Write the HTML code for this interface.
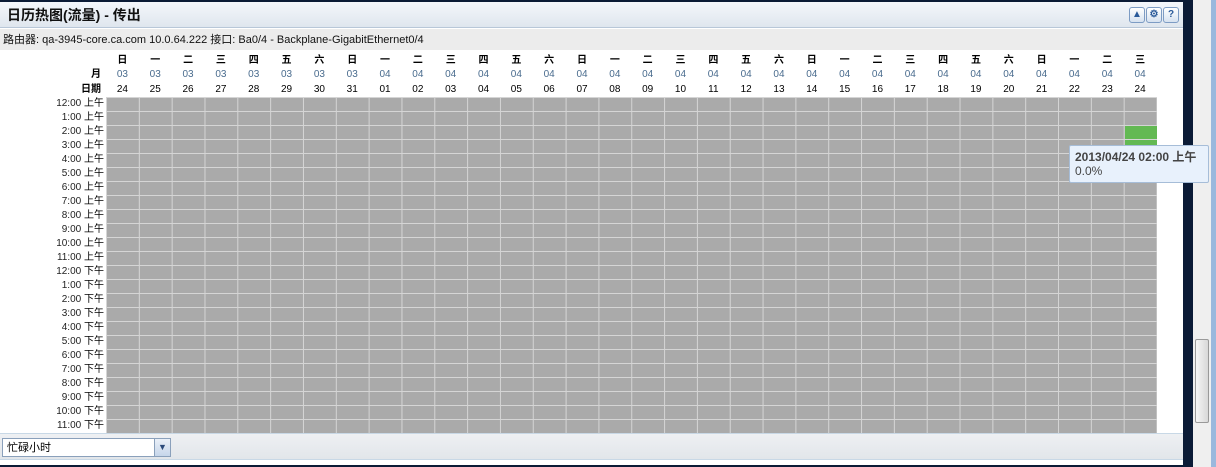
<!DOCTYPE html>
<html><head><meta charset="utf-8"><style>
*{margin:0;padding:0;box-sizing:border-box}
body{width:1216px;height:467px;background:#0b1b36;position:relative;overflow:hidden;font-family:"Liberation Sans","Noto Sans CJK SC",sans-serif;font-size:11px;color:#000}
#panel{position:absolute;left:0;top:2px;width:1183px;height:463px;background:#fff}
#title{position:absolute;left:0;top:0;width:1183px;height:26px;background:linear-gradient(#f4f7fb,#dfe6ee);border-bottom:1px solid #b8c7d8}
#title span{position:absolute;left:7px;top:4px;font-size:14px;line-height:18px;font-weight:bold;color:#111}
.btn{position:absolute;top:5px;width:16px;height:16px;border:1px solid #7d9cc4;border-radius:3px;background:linear-gradient(#fff,#d6e2f0);font-size:10px;text-align:center;line-height:14px;color:#2a5a9a;font-weight:bold}
#info{position:absolute;left:0;top:27px;width:1183px;height:21px;background:#ececec;font-size:11px;line-height:14px;padding:4px 0 0 3px;color:#111}
#hdr{position:absolute;left:0;top:48px;width:1157px;height:46px;background:#fff}
.row{position:absolute;left:106px;display:flex;line-height:12px}
.row div{width:32.84px;text-align:center;font-size:10px;line-height:12px}
.lab{position:absolute;right:1056px;font-size:10px;line-height:12px;font-weight:bold;text-align:right}
#grid{position:absolute;left:106px;top:95px;width:1051px;height:336px;background-color:#aaa;
background-image:linear-gradient(90deg,#d5d5d5 1px,transparent 1px),linear-gradient(#d5d5d5 1px,transparent 1px);
background-size:32.84px 14px}
#hours{position:absolute;left:0;top:95px;width:104px}
#hours div{height:14px;line-height:14px;text-align:right;font-size:10px;color:#222}
#hours b{font-weight:normal;color:#000}
.green{position:absolute;background:#63b953}
#bot{position:absolute;left:0;top:431px;width:1183px;height:27px;background:linear-gradient(#eef0f3,#e2e6ea);border-top:1px solid #c8d8e6;border-bottom:1px solid #c8d8e6}
#sel{position:absolute;left:2px;top:4px;width:169px;height:19px;border:1px solid #8aa0bb;background:#fff;font-size:11px;line-height:14px;padding:2px 0 0 4px}
#sel i{position:absolute;right:0;top:0;width:16px;height:17px;background:linear-gradient(#eaf0f8,#c6d6ea);border-left:1px solid #8aa0bb;font-style:normal;font-size:9px;color:#2a4a7a;text-align:center;line-height:17px}
#tip{position:absolute;z-index:5;left:1069px;top:145px;width:140px;height:38px;background:#e8f1fc;border:1px solid #a6bdd8;border-radius:2px;padding:4px 0 0 5px;color:#444;font-size:12px;line-height:14px;white-space:nowrap;overflow:hidden}
#sb{position:absolute;left:1193px;top:0;width:18px;height:467px;background:#efefef}
#thumb{position:absolute;left:1195px;top:339px;width:14px;height:84px;border:1px solid #999;border-radius:2px;background:linear-gradient(90deg,#f5f5f5,#d8d8d8)}
#blue{position:absolute;left:1211px;top:0;width:5px;height:467px;background:#9ab8dd}
</style></head><body>
<div id="panel">
<div id="title"><span>日历热图(流量) - 传出</span>
<div class="btn" style="left:1129px">▲</div><div class="btn" style="left:1146px">⚙</div><div class="btn" style="left:1163px">?</div></div>
<div id="info">路由器: qa-3945-core.ca.com 10.0.64.222 接口: Ba0/4 - Backplane-GigabitEthernet0/4</div>
<div id="hdr">
<div class="lab" style="top:19px">月</div><div class="lab" style="top:34px">日期</div>
<div class="row" style="top:5px;font-weight:bold"><div>日</div><div>一</div><div>二</div><div>三</div><div>四</div><div>五</div><div>六</div><div>日</div><div>一</div><div>二</div><div>三</div><div>四</div><div>五</div><div>六</div><div>日</div><div>一</div><div>二</div><div>三</div><div>四</div><div>五</div><div>六</div><div>日</div><div>一</div><div>二</div><div>三</div><div>四</div><div>五</div><div>六</div><div>日</div><div>一</div><div>二</div><div>三</div></div>
<div class="row" style="top:19px;color:#4a6c8e"><div>03</div><div>03</div><div>03</div><div>03</div><div>03</div><div>03</div><div>03</div><div>03</div><div>04</div><div>04</div><div>04</div><div>04</div><div>04</div><div>04</div><div>04</div><div>04</div><div>04</div><div>04</div><div>04</div><div>04</div><div>04</div><div>04</div><div>04</div><div>04</div><div>04</div><div>04</div><div>04</div><div>04</div><div>04</div><div>04</div><div>04</div><div>04</div></div>
<div class="row" style="top:34px"><div>24</div><div>25</div><div>26</div><div>27</div><div>28</div><div>29</div><div>30</div><div>31</div><div>01</div><div>02</div><div>03</div><div>04</div><div>05</div><div>06</div><div>07</div><div>08</div><div>09</div><div>10</div><div>11</div><div>12</div><div>13</div><div>14</div><div>15</div><div>16</div><div>17</div><div>18</div><div>19</div><div>20</div><div>21</div><div>22</div><div>23</div><div>24</div></div>
</div>
<div id="hours">
<div>12:00 <b>上午</b></div><div>1:00 <b>上午</b></div><div>2:00 <b>上午</b></div><div>3:00 <b>上午</b></div><div>4:00 <b>上午</b></div><div>5:00 <b>上午</b></div><div>6:00 <b>上午</b></div><div>7:00 <b>上午</b></div><div>8:00 <b>上午</b></div><div>9:00 <b>上午</b></div><div>10:00 <b>上午</b></div><div>11:00 <b>上午</b></div>
<div>12:00 <b>下午</b></div><div>1:00 <b>下午</b></div><div>2:00 <b>下午</b></div><div>3:00 <b>下午</b></div><div>4:00 <b>下午</b></div><div>5:00 <b>下午</b></div><div>6:00 <b>下午</b></div><div>7:00 <b>下午</b></div><div>8:00 <b>下午</b></div><div>9:00 <b>下午</b></div><div>10:00 <b>下午</b></div><div>11:00 <b>下午</b></div>
</div>
<div id="grid"></div>
<div class="green" style="left:1125px;top:124px;width:32px;height:13px"></div>
<div class="green" style="left:1125px;top:138px;width:32px;height:13px"></div>
<div id="bot"><div id="sel">忙碌小时<i>▼</i></div></div>
</div>
<div id="sb"></div><div id="thumb"></div><div id="blue"></div>
<div id="tip"><b>2013/04/24 02:00 上午</b><br>0.0%</div>
</body></html>
